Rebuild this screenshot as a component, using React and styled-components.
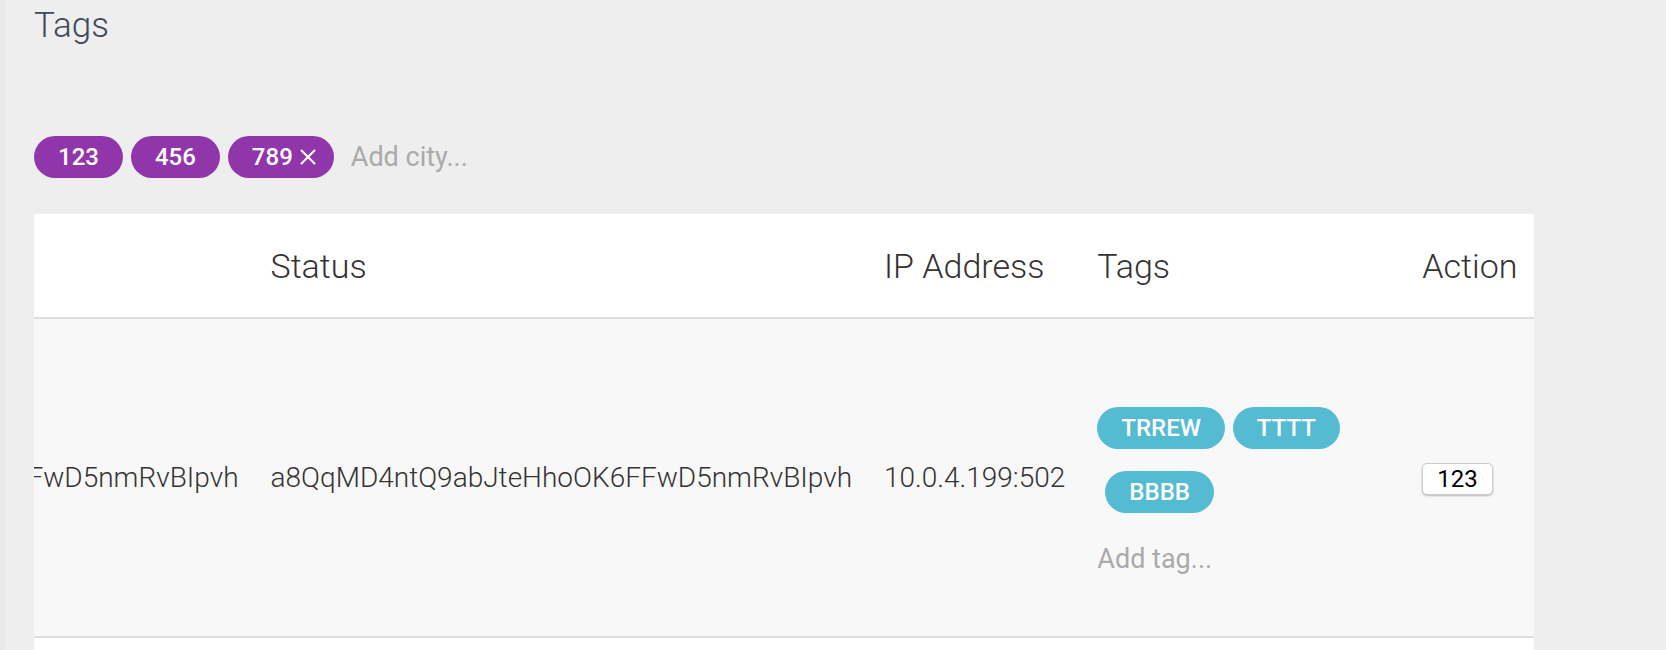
import { useLayoutEffect, useRef } from "react";
import styled, { createGlobalStyle } from "styled-components";

const GlobalStyle = createGlobalStyle`
  html, body {
    margin: 0;
    padding: 0;
    background: #eeeeee;
    font-family: Roboto, "Noto Sans", "Liberation Sans", sans-serif;
  }
  * { box-sizing: border-box; }
`;

const cities = ["123", "456", "789"];

const rows = [
  {
    id: "a8QqMD4ntQ9abJteHhoOK6FFwD5nmRvBIpvh",
    status: "a8QqMD4ntQ9abJteHhoOK6FFwD5nmRvBIpvh",
    ip: "10.0.4.199:502",
    tags: ["TRREW", "TTTT", "BBBB"],
    action: "123",
  },
  {
    id: "Pz7KqLm2Xc9RtYb4NwE1sVhD8uJfGa3oQiCe",
    status: "Pz7KqLm2Xc9RtYb4NwE1sVhD8uJfGa3oQiCe",
    ip: "10.0.4.200:502",
    tags: ["AAAA"],
    action: "123",
  },
];

const CloseIcon = () => (
  <svg width="16" height="16" viewBox="0 0 16 16" fill="none">
    <path d="M1.5 1.5 L14.5 14.5 M14.5 1.5 L1.5 14.5" stroke="#fff" strokeWidth="2" strokeLinecap="round" />
  </svg>
);

export default function App() {
  const scrollRef = useRef(null);
  const statusRef = useRef(null);

  useLayoutEffect(() => {
    // the table is scrolled so that the Status column sits near the left
    if (scrollRef.current && statusRef.current) {
      scrollRef.current.scrollLeft = statusRef.current.offsetLeft - 221;
    }
  }, []);

  return (
    <>
      <GlobalStyle />
      <Page>
        <SideEdge />
        <Main>
          <Title>Tags</Title>
          <TagInput>
            {cities.map((c, i) => (
              <CityPill key={c} $removable={i === cities.length - 1}>
                {c}
                {i === cities.length - 1 && <CloseIcon />}
              </CityPill>
            ))}
            <CityInput placeholder="Add city..." />
          </TagInput>

          <Panel ref={scrollRef}>
            <Table>
              <thead>
                <tr>
                  <Th>ID</Th>
                  <Th ref={statusRef}>Status</Th>
                  <Th>IP Address</Th>
                  <Th>Tags</Th>
                  <Th>Action</Th>
                </tr>
              </thead>
              <tbody>
                {rows.map((r, i) => (
                  <Row key={r.id} $striped={i % 2 === 0}>
                    <Td>{r.id}</Td>
                    <Td>{r.status}</Td>
                    <Td>{r.ip}</Td>
                    <TagCell>
                      <TagList>
                        {r.tags.map((t) => (
                          <TagPill key={t}>{t}</TagPill>
                        ))}
                      </TagList>
                      <TagAdd placeholder="Add tag..." />
                    </TagCell>
                    <Td>
                      <ActionButton>{r.action}</ActionButton>
                    </Td>
                  </Row>
                ))}
              </tbody>
            </Table>
          </Panel>
        </Main>
      </Page>
    </>
  );
}

const Page = styled.div`
  display: flex;
  min-height: 650px;
  background: #eeeeee;
`;

const SideEdge = styled.div`
  width: 6px;
  flex: none;
  background: #e9e9e9;
`;

const Main = styled.div`
  display: flex;
  flex-direction: column;
  padding: 5px 0 0 28px;
`;

const Title = styled.h1`
  margin: 0;
  font-size: 35px;
  font-weight: 300;
  line-height: 41px;
  color: #3e4959;
`;

const TagInput = styled.div`
  display: flex;
  align-items: center;
  gap: 8px;
  margin-top: 90px;
  height: 42px;
`;

const CityPill = styled.span`
  display: inline-flex;
  align-items: center;
  gap: 7px;
  height: 42px;
  padding: ${(p) => (p.$removable ? "0 18px 0 24px" : "0 24px")};
  border-radius: 21px;
  background: #9135aa;
  color: #fff;
  font-size: 24px;
  font-weight: 500;
`;

const CityInput = styled.input`
  margin-left: 9px;
  border: none;
  outline: none;
  background: transparent;
  font-family: inherit;
  font-size: 27px;
  font-weight: 400;
  color: #333;
  padding: 0;
  width: 200px;
  &::placeholder {
    color: #aaaaaa;
  }
`;

const Panel = styled.div`
  margin-top: 36px;
  width: 1500px;
  background: #fff;
  overflow-x: auto;
  scrollbar-width: none;
  &::-webkit-scrollbar {
    display: none;
  }
`;

const Table = styled.table`
  border-collapse: collapse;
  width: max-content;
`;

const Th = styled.th`
  height: 104px;
  padding: 0 16px;
  text-align: left;
  vertical-align: middle;
  font-size: 34px;
  font-weight: 300;
  color: #333;
  white-space: nowrap;
  border-bottom: 2px solid #dddddd;
  &:last-child {
    padding-right: 22px;
  }
`;

const Row = styled.tr`
  background: ${(p) => (p.$striped ? "#f8f8f8" : "#ffffff")};
  border-bottom: 2px solid #dddddd;
`;

const Td = styled.td`
  padding: 0 16px;
  vertical-align: middle;
  font-size: 28px;
  font-weight: 300;
  color: #333;
  white-space: nowrap;
  &:last-child {
    padding-right: 22px;
  }
`;

const TagCell = styled.td`
  padding: 88px 16px 61px;
  vertical-align: top;
`;

const TagList = styled.div`
  display: flex;
  flex-wrap: wrap;
  row-gap: 22px;
  width: 293px;
`;

const TagPill = styled.span`
  display: inline-flex;
  align-items: center;
  height: 42px;
  padding: 0 24px;
  border-radius: 21px;
  background: #55bbd3;
  color: #fff;
  font-size: 24px;
  font-weight: 500;
  & + & {
    margin-left: 8px;
  }
`;

const TagAdd = styled.input`
  display: block;
  margin-top: 30px;
  height: 32px;
  width: 200px;
  padding: 0;
  border: none;
  outline: none;
  background: transparent;
  font-family: inherit;
  font-size: 27px;
  color: #333;
  &::placeholder {
    color: #aaaaaa;
  }
`;

const ActionButton = styled.button`
  height: 32px;
  padding: 0 14px;
  background: #fff;
  border: 1px solid #cccccc;
  border-radius: 5px;
  box-shadow: 0 1px 2px rgba(0, 0, 0, 0.25);
  font-family: inherit;
  font-size: 24px;
  font-weight: 400;
  line-height: 30px;
  color: #000;
`;
